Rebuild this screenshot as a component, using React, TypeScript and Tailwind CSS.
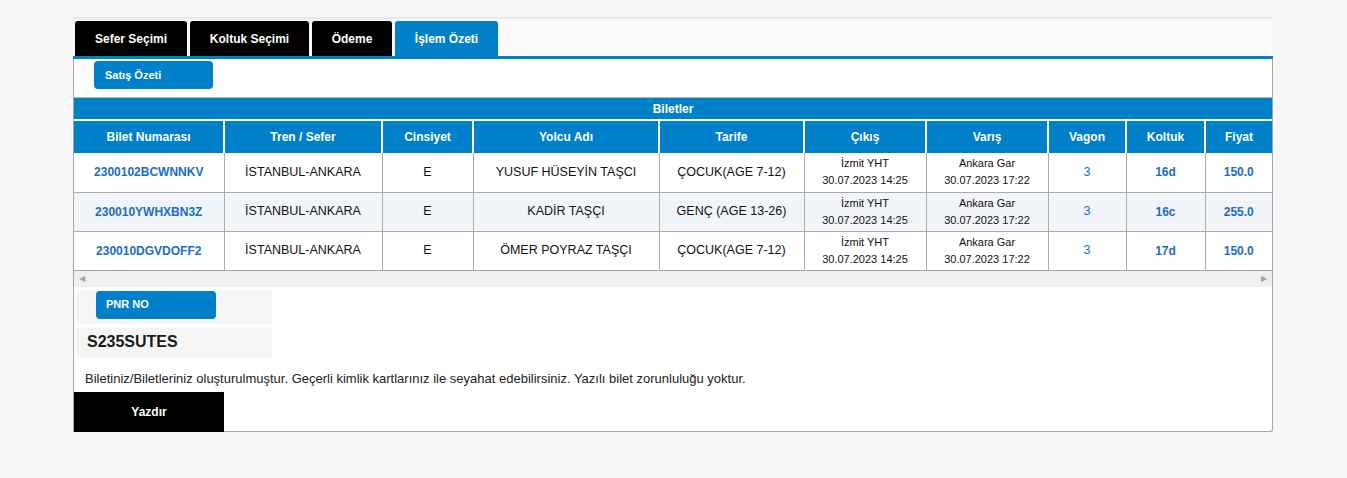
const tickets = [
  {
    no: '2300102BCWNNKV',
    route: 'İSTANBUL-ANKARA',
    gender: 'E',
    name: 'YUSUF HÜSEYİN TAŞCI',
    fare: 'ÇOCUK(AGE 7-12)',
    wagon: '3',
    seat: '16d',
    price: '150.0',
  },
  {
    no: '230010YWHXBN3Z',
    route: 'İSTANBUL-ANKARA',
    gender: 'E',
    name: 'KADİR TAŞÇI',
    fare: 'GENÇ (AGE 13-26)',
    wagon: '3',
    seat: '16c',
    price: '255.0',
  },
  {
    no: '230010DGVDOFF2',
    route: 'İSTANBUL-ANKARA',
    gender: 'E',
    name: 'ÖMER POYRAZ TAŞÇI',
    fare: 'ÇOCUK(AGE 7-12)',
    wagon: '3',
    seat: '17d',
    price: '150.0',
  },
];

const tabs = [
  { label: 'Sefer Seçimi', w: 'w-[112px]', active: false },
  { label: 'Koltuk Seçimi', w: 'w-[119px]', active: false },
  { label: 'Ödeme', w: 'w-[80px]', active: false },
  { label: 'İşlem Özeti', w: 'w-[103px]', active: true },
];

const headers = ['Bilet Numarası', 'Tren / Sefer', 'Cinsiyet', 'Yolcu Adı', 'Tarife', 'Çıkış', 'Varış', 'Vagon', 'Koltuk', 'Fiyat'];
const widths = [150, 158, 91, 186, 145, 122, 122, 78, 79, 67];

export default function App() {
  return (
    <div className="min-h-[478px] bg-[#f7f7f7] pt-[17px] font-['Liberation_Sans',Arial,sans-serif]">
      <div className="ml-[73px] w-[1200px]">
        {/* Tabs */}
        <div className="flex gap-[3px] border-t-2 border-[#e8e8e8] bg-[#fafafa] pl-[2px] pt-[2px]">
          {tabs.map((t) => (
            <div
              key={t.label}
              className={`${t.w} h-[35px] flex items-center justify-center rounded-t-[3px] text-[12px] font-bold text-white ${
                t.active ? 'bg-[#0080c9]' : 'bg-black'
              }`}
            >
              {t.label}
            </div>
          ))}
        </div>
        <div className="h-[3px] bg-[#0080c9]" />

        {/* Panel */}
        <div className="h-[373px] border-x border-b border-[#a9a9a9] rounded-br-[3px] bg-white">
          <div className="pt-[2px] pl-[20px]">
            <div className="w-[119px] h-[28px] flex items-center rounded-[4px] bg-[#0080c9] pl-[11px] text-[11px] font-bold text-white">
              Satış Özeti
            </div>
          </div>

          {/* Tickets table */}
          <div className="mt-[8px] border-t border-[#b5b5b5]">
            <div className="h-[21px] flex items-center justify-center bg-[#0080c9] text-[12px] font-bold text-white">
              Biletler
            </div>
            <table className="table-fixed border-collapse w-[1198px] text-[12.5px]">
              <colgroup>
                {widths.map((w, i) => (
                  <col key={i} style={{ width: w }} />
                ))}
              </colgroup>
              <thead>
                <tr className="h-[33px] bg-[#0080c9] text-white border-t-2 border-white">
                  {headers.map((h, i) => (
                    <th
                      key={h}
                      className={`font-bold text-[12px] ${i > 0 ? 'border-l-2 border-white' : ''}`}
                    >
                      {h}
                    </th>
                  ))}
                </tr>
              </thead>
              <tbody>
                {tickets.map((t, r) => (
                  <tr
                    key={t.no}
                    className={`h-[39px] border-b border-[#ababab] ${r === 1 ? 'bg-[#f1f4f9]' : 'bg-white'}`}
                  >
                    <td className="text-center text-[12px] font-bold text-[#1b6ec2]">{t.no}</td>
                    <td className="text-center border-l border-[#ababab] text-[#111]">{t.route}</td>
                    <td className="text-center border-l border-[#ababab] text-[#111]">{t.gender}</td>
                    <td className="text-center border-l border-[#ababab] text-[#111]">{t.name}</td>
                    <td className="text-center border-l border-[#ababab] text-[#111]">{t.fare}</td>
                    <td className="text-center border-l border-[#ababab] text-[11px] leading-[17px] text-[#111]">
                      İzmit YHT
                      <br />
                      30.07.2023 14:25
                    </td>
                    <td className="text-center border-l border-[#ababab] text-[11px] leading-[17px] text-[#111]">
                      Ankara Gar
                      <br />
                      30.07.2023 17:22
                    </td>
                    <td className="text-center border-l border-[#ababab] text-[#1b6ec2]">{t.wagon}</td>
                    <td className="text-center border-l border-[#ababab] text-[12px] font-bold text-[#1b6ec2]">{t.seat}</td>
                    <td className="text-center border-l border-[#ababab] text-[12px] font-bold text-[#1b6ec2]">{t.price}</td>
                  </tr>
                ))}
              </tbody>
            </table>
            {/* horizontal scrollbar */}
            <div className="h-[16px] flex items-center justify-between bg-[#f0f0f0] px-[5px] text-[8px] text-[#a3a3a3]">
              <span>◀</span>
              <span>▶</span>
            </div>
          </div>

          {/* PNR */}
          <div className="mt-[4px] ml-[2px] w-[196px]">
            <div className="h-[33px] bg-[#f5f5f5] pl-[20px]">
              <div className="w-[120px] h-[28px] flex items-center rounded-[4px] bg-[#0080c9] pl-[10px] text-[11px] font-bold text-white">
                PNR NO
              </div>
            </div>
            <div className="mt-[4px] h-[29px] flex items-center bg-[#f5f5f5] pl-[11px] text-[16px] font-bold text-[#1a1a1a]">
              S235SUTES
            </div>
          </div>

          <p className="mt-[14px] pl-[11px] text-[13px] leading-[15px] text-[#222]">
            Biletiniz/Biletleriniz oluşturulmuştur. Geçerli kimlik kartlarınız ile seyahat edebilirsiniz. Yazılı bilet zorunluluğu yoktur.
          </p>

          <div className="mt-[6px] w-[150px] h-[40px] flex items-center justify-center bg-black text-[12px] font-bold text-white">
            Yazdır
          </div>
        </div>
      </div>
    </div>
  );
}
